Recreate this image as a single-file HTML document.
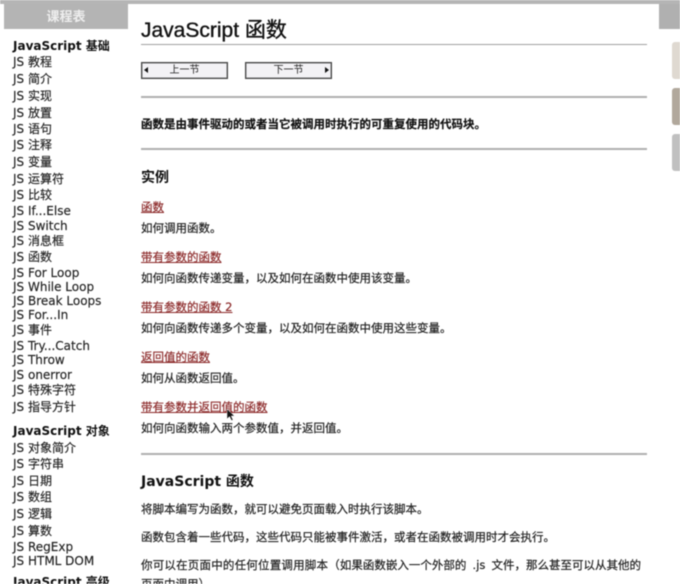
<!DOCTYPE html>
<html lang="zh">
<head>
<meta charset="utf-8">
<style>
html,body{margin:0;padding:0;background:#fff;}
#p{position:relative;width:680px;height:584px;overflow:hidden;background:#fff;font-family:"DejaVu Sans","Noto Sans CJK SC",sans-serif;color:#222;filter:blur(.45px);text-spacing-trim:space-all;}
#p div{position:absolute;white-space:nowrap;}
.s{left:13px;font-size:12px;line-height:16px;height:16px;color:#222;-webkit-text-stroke:.15px #222;}
.b{font-weight:bold;color:#111;-webkit-text-stroke:0;}
.hr{left:141px;width:506px;height:2px;background:#b0b0b0;}
.t{left:141px;font-size:11.5px;line-height:16px;height:16px;color:#222;-webkit-text-stroke:.2px #222;}
.a{left:141px;font-size:11.5px;line-height:16px;height:16px;color:#8c2a2a;text-decoration:underline;-webkit-text-stroke:.2px #8c2a2a;}
.btn{top:62px;height:15px;background:#f3f2f5;border:1px solid #444;font-size:10px;line-height:15px;color:#222;text-align:center;box-shadow:inset 0 0 0 .5px #777;}
.tab{left:672px;width:10px;height:37px;border-radius:3px;}
</style>
</head>
<body>
<div id="p">
<div style="left:0;top:0;width:680px;height:4px;background:#b5b5b5;"></div>
<div style="left:4px;top:4px;width:124px;height:25px;background:#b4b4b4;color:#eee;font-size:13px;line-height:27px;text-align:center;font-weight:bold;">课程表</div>
<div style="left:659px;top:4px;width:21px;height:25px;background:#b0b0b0;"></div>
<div class="tab" style="top:42px;background:#dfd9d1;"></div>
<div class="tab" style="top:88px;background:#b1a89c;"></div>
<div class="tab" style="top:134px;background:#c0c0c0;"></div>

<div class="s b" style="top:38px;">JavaScript 基础</div>
<div class="s" style="top:54px;">JS 教程</div>
<div class="s" style="top:71px;">JS 简介</div>
<div class="s" style="top:88px;">JS 实现</div>
<div class="s" style="top:105px;">JS 放置</div>
<div class="s" style="top:121px;">JS 语句</div>
<div class="s" style="top:137px;">JS 注释</div>
<div class="s" style="top:154px;">JS 变量</div>
<div class="s" style="top:171px;">JS 运算符</div>
<div class="s" style="top:187px;">JS 比较</div>
<div class="s" style="top:203px;">JS If...Else</div>
<div class="s" style="top:218px;">JS Switch</div>
<div class="s" style="top:233px;">JS 消息框</div>
<div class="s" style="top:249px;">JS 函数</div>
<div class="s" style="top:265px;">JS For Loop</div>
<div class="s" style="top:279px;">JS While Loop</div>
<div class="s" style="top:293px;">JS Break Loops</div>
<div class="s" style="top:307px;">JS For...In</div>
<div class="s" style="top:322px;">JS 事件</div>
<div class="s" style="top:338px;">JS Try...Catch</div>
<div class="s" style="top:352px;">JS Throw</div>
<div class="s" style="top:367px;">JS onerror</div>
<div class="s" style="top:382px;">JS 特殊字符</div>
<div class="s" style="top:399px;">JS 指导方针</div>
<div class="s b" style="top:423px;">JavaScript 对象</div>
<div class="s" style="top:440px;">JS 对象简介</div>
<div class="s" style="top:456px;">JS 字符串</div>
<div class="s" style="top:473px;">JS 日期</div>
<div class="s" style="top:489px;">JS 数组</div>
<div class="s" style="top:506px;">JS 逻辑</div>
<div class="s" style="top:523px;">JS 算数</div>
<div class="s" style="top:539px;">JS RegExp</div>
<div class="s" style="top:553px;">JS HTML DOM</div>
<div class="s b" style="top:574px;">JavaScript 高级</div>

<div style="left:141px;top:18px;font-family:'Liberation Sans','Noto Sans CJK SC',sans-serif;font-size:21px;line-height:26px;color:#111;-webkit-text-stroke:.35px #111;">JavaScript 函数</div>
<div class="hr" style="top:44px;height:1px;background:#a0a0a0;"></div>
<div class="btn" style="left:141px;width:85px;">上一节</div>
<div style="left:144px;top:67px;width:0;height:0;border:3px solid transparent;border-left:0;border-right:4px solid #111;"></div>
<div class="btn" style="left:245px;width:85px;">下一节</div>
<div style="left:325px;top:67px;width:0;height:0;border:3px solid transparent;border-right:0;border-left:4px solid #111;"></div>
<div class="hr" style="top:96px;"></div>
<div class="t" style="top:116px;font-weight:bold;color:#111;">函数是由事件驱动的或者当它被调用时执行的可重复使用的代码块。</div>
<div class="hr" style="top:148px;"></div>
<div style="left:141px;top:168px;font-size:14px;line-height:20px;font-weight:bold;color:#111;">实例</div>

<div class="a" style="top:199px;">函数</div>
<div class="t" style="top:220px;">如何调用函数。</div>
<div class="a" style="top:249px;">带有参数的函数</div>
<div class="t" style="top:270px;">如何向函数传递变量，以及如何在函数中使用该变量。</div>
<div class="a" style="top:299px;">带有参数的函数 2</div>
<div class="t" style="top:320px;">如何向函数传递多个变量，以及如何在函数中使用这些变量。</div>
<div class="a" style="top:349px;">返回值的函数</div>
<div class="t" style="top:370px;">如何从函数返回值。</div>
<div class="a" style="top:399px;">带有参数并返回值的函数</div>
<div class="t" style="top:420px;">如何向函数输入两个参数值，并返回值。</div>
<svg style="position:absolute;left:226px;top:408px;" width="10" height="14" viewBox="0 0 10 14"><path d="M1 1 L1 11 L3.500 8.500 L5.500 12.500 L7 12 L5.200 8 L8.500 8 Z" fill="#111" stroke="#eee" stroke-width=".5"/></svg>
<div class="hr" style="top:453px;"></div>
<div style="left:141px;top:472px;font-size:14px;line-height:20px;font-weight:bold;color:#111;">JavaScript 函数</div>
<div class="t" style="top:501px;">将脚本编写为函数，就可以避免页面载入时执行该脚本。</div>
<div class="t" style="top:529px;">函数包含着一些代码，这些代码只能被事件激活，或者在函数被调用时才会执行。</div>
<div class="t" style="top:557px;word-spacing:2.5px;"><span style="letter-spacing:.2px;">你可以在页面中的任何位置调用脚本（</span>如果函数嵌入一个外部的 .js 文件，那么甚至可以从其他的</div>
<div class="t" style="top:576px;">页面中调用）。</div>
</div>
</body>
</html>
